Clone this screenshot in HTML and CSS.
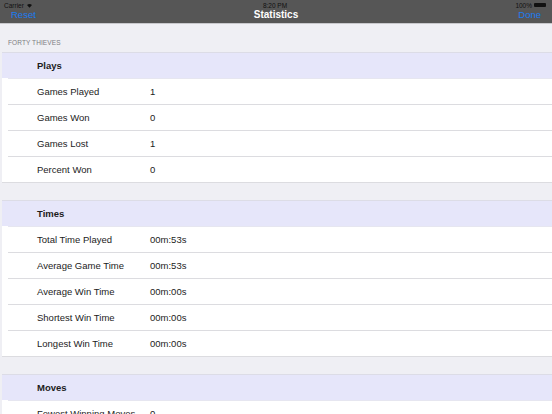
FILE: index.html
```html
<!DOCTYPE html>
<html>
<head>
<meta charset="utf-8">
<link rel="stylesheet" href="styles.css">
</head>
<body>
<header class="topbar">
  <div class="status">
    <div class="st-left">Carrier
      <svg class="wifi" viewBox="0 0 10 8" width="7" height="5"><path d="M5 7.5 L1 3.2 A6 6 0 0 1 9 3.2 Z" fill="#111"/></svg>
    </div>
    <div class="st-mid">8:20 PM</div>
    <div class="st-right">100% <span class="battery"></span></div>
  </div>
  <div class="nav">
    <div class="nav-left">Reset</div>
    <div class="nav-title">Statistics</div>
    <div class="nav-right">Done</div>
  </div>
</header>
<main class="content">
  <div class="section-label">FORTY THIEVES</div>
  <div class="table">
    <div class="group-head">Plays</div>
    <div class="row"><div class="cell"><span class="k">Games Played</span><span class="v">1</span></div></div>
    <div class="row"><div class="cell"><span class="k">Games Won</span><span class="v">0</span></div></div>
    <div class="row"><div class="cell"><span class="k">Games Lost</span><span class="v">1</span></div></div>
    <div class="row last"><div class="cell"><span class="k">Percent Won</span><span class="v">0</span></div></div>
    <div class="gap"></div>
    <div class="group-head">Times</div>
    <div class="row"><div class="cell"><span class="k">Total Time Played</span><span class="v">00m:53s</span></div></div>
    <div class="row"><div class="cell"><span class="k">Average Game Time</span><span class="v">00m:53s</span></div></div>
    <div class="row"><div class="cell"><span class="k">Average Win Time</span><span class="v">00m:00s</span></div></div>
    <div class="row"><div class="cell"><span class="k">Shortest Win Time</span><span class="v">00m:00s</span></div></div>
    <div class="row last"><div class="cell"><span class="k">Longest Win Time</span><span class="v">00m:00s</span></div></div>
    <div class="gap"></div>
    <div class="group-head">Moves</div>
    <div class="row"><div class="cell"><span class="k">Fewest Winning Moves</span><span class="v">0</span></div></div>
  </div>
</main>
</body>
</html>
```
FILE: styles.css
```css
html, body {
  margin: 0;
  padding: 0;
}
body {
  width: 552px;
  height: 414px;
  overflow: hidden;
  background: #efeff4;
  font-family: "Liberation Sans", Arial, sans-serif;
  color: #1c1c1c;
}
.topbar {
  background: #565656;
  height: 23px;
  border-bottom: 1px solid #c8c8cc;
  display: flex;
  flex-direction: column;
}
.status {
  height: 8px;
  display: grid;
  grid-template-columns: 1fr auto 1fr;
  align-items: center;
  font-size: 6.5px;
  color: #111;
  padding: 1px 6px 0 4px;
}
.st-left { display: flex; align-items: center; gap: 2px; }
.st-mid { text-align: center; }
.st-right { display: flex; justify-content: flex-end; align-items: center; gap: 2px; }
.battery {
  display: inline-block;
  width: 12px;
  height: 4px;
  background: #111;
  border-radius: 1px;
}
.nav {
  flex: 1;
  display: grid;
  grid-template-columns: 1fr auto 1fr;
  align-items: center;
  padding: 0 11px 3px 11px;
  font-size: 9.5px;
}
.nav-left { color: #1b7cf3; }
.nav-right { color: #1b7cf3; text-align: right; }
.nav-title {
  color: #fff;
  font-weight: bold;
  font-size: 10px;
}
.content {
  padding-top: 15px;
}
.section-label {
  font-size: 6.5px;
  color: #7d7d82;
  padding: 0 0 5px 8px;
  line-height: 8px;
  letter-spacing: 0.1px;
}
.table {
  margin-left: 2px;
}
.group-head {
  background: #e6e6fa;
  height: 25px;
  line-height: 25px;
  padding-left: 35px;
  font-weight: bold;
  font-size: 9.5px;
  border-top: 1px solid #dcdce6;
}
.row {
  background: #fff;
  padding-left: 6px;
  font-size: 9.5px;
}
.cell {
  display: flex;
  align-items: center;
  height: 25px;
  padding-left: 29px;
  border-top: 1px solid #dcdce0;
}
.group-head + .row .cell {
  border-top-color: #e6e6f0;
}
.row.last {
  border-bottom: 1px solid #dcdce0;
}
.row .k { width: 113px; }
.gap {
  height: 17px;
  background: #efeff4;
}
```
